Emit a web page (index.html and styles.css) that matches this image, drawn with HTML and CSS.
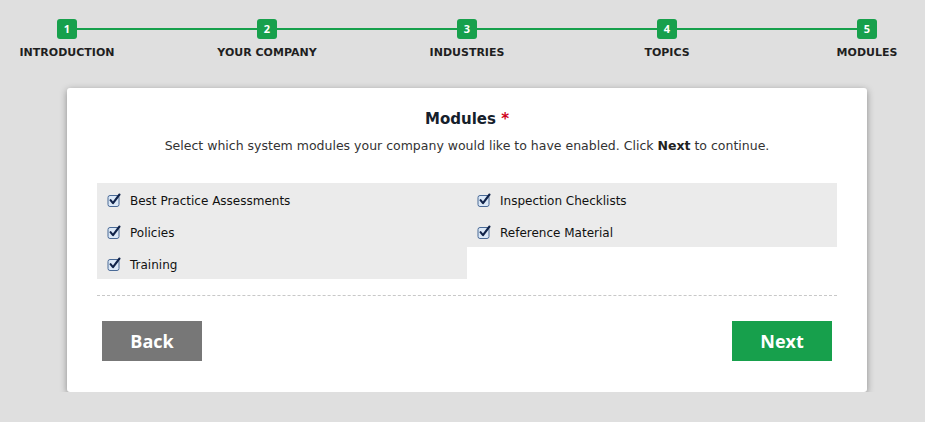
FILE: index.html
```html
<!DOCTYPE html>
<html>
<head>
<meta charset="utf-8">
<link rel="stylesheet" href="styles.css">
</head>
<body>
<ol class="steps">
  <li class="step"><span class="num">1</span><span class="label">INTRODUCTION</span></li>
  <li class="step"><span class="num">2</span><span class="label">YOUR COMPANY</span></li>
  <li class="step"><span class="num">3</span><span class="label">INDUSTRIES</span></li>
  <li class="step"><span class="num">4</span><span class="label">TOPICS</span></li>
  <li class="step"><span class="num">5</span><span class="label">MODULES</span></li>
</ol>
<div class="card">
  <h1 class="title">Modules <span class="req">*</span></h1>
  <p class="intro">Select which system modules your company would like to have enabled. Click <b>Next</b> to continue.</p>
  <div class="options">
    <div class="col">
      <label class="opt"><svg class="cb" viewBox="0 0 14 14"><rect x="1" y="2.5" width="11" height="11" rx="2" fill="#dbe8f7" stroke="#4a6a96"/><path d="M3.5 7.2 L6 10.2 L12.5 1.5" fill="none" stroke="#10234a" stroke-width="2.1" stroke-linecap="round" stroke-linejoin="round"/></svg>Best Practice Assessments</label>
      <label class="opt"><svg class="cb" viewBox="0 0 14 14"><rect x="1" y="2.5" width="11" height="11" rx="2" fill="#dbe8f7" stroke="#4a6a96"/><path d="M3.5 7.2 L6 10.2 L12.5 1.5" fill="none" stroke="#10234a" stroke-width="2.1" stroke-linecap="round" stroke-linejoin="round"/></svg>Policies</label>
      <label class="opt"><svg class="cb" viewBox="0 0 14 14"><rect x="1" y="2.5" width="11" height="11" rx="2" fill="#dbe8f7" stroke="#4a6a96"/><path d="M3.5 7.2 L6 10.2 L12.5 1.5" fill="none" stroke="#10234a" stroke-width="2.1" stroke-linecap="round" stroke-linejoin="round"/></svg>Training</label>
    </div>
    <div class="col">
      <label class="opt"><svg class="cb" viewBox="0 0 14 14"><rect x="1" y="2.5" width="11" height="11" rx="2" fill="#dbe8f7" stroke="#4a6a96"/><path d="M3.5 7.2 L6 10.2 L12.5 1.5" fill="none" stroke="#10234a" stroke-width="2.1" stroke-linecap="round" stroke-linejoin="round"/></svg>Inspection Checklists</label>
      <label class="opt"><svg class="cb" viewBox="0 0 14 14"><rect x="1" y="2.5" width="11" height="11" rx="2" fill="#dbe8f7" stroke="#4a6a96"/><path d="M3.5 7.2 L6 10.2 L12.5 1.5" fill="none" stroke="#10234a" stroke-width="2.1" stroke-linecap="round" stroke-linejoin="round"/></svg>Reference Material</label>
    </div>
  </div>
  <div class="actions">
    <button class="btn back">Back</button>
    <button class="btn next">Next</button>
  </div>
</div>
</body>
</html>
```
FILE: styles.css
```css
html, body {
  margin: 0;
  padding: 0;
  background: #dfdfdf;
  font-family: "DejaVu Sans", "Liberation Sans", sans-serif;
  color: #222;
}
.steps {
  list-style: none;
  margin: 0 0 0 17px;
  padding: 19px 0 0 0;
  width: 900px;
  display: flex;
  gap: 100px;
  background: linear-gradient(#17a04c, #17a04c) no-repeat 50px 28px / 800px 2px;
}
.step {
  width: 100px;
  display: flex;
  flex-direction: column;
  align-items: center;
}
.num {
  width: 20px;
  height: 20px;
  border-radius: 3px;
  background: #17a04c;
  color: #fff;
  font-family: "Open Sans", sans-serif;
  font-weight: 700;
  font-size: 11px;
  line-height: 20px;
  text-align: center;
}
.label {
  margin-top: 7px;
  font-weight: 700;
  font-size: 11px;
  white-space: nowrap;
  color: #1f1f1f;
}
.card {
  margin: 29px 0 0 67px;
  width: 800px;
  box-sizing: border-box;
  background: #fff;
  border-radius: 3px;
  box-shadow: 0 2px 7px rgba(0,0,0,0.38);
  padding: 20px 30px 31px;
}
.title {
  margin: 0;
  text-align: center;
  font-size: 15px;
  font-weight: 700;
  color: #15202b;
  line-height: 22px;
}
.req { color: #d0021b; }
.intro {
  margin: 5px 0 0;
  text-align: center;
  font-size: 12.5px;
  color: #333;
  line-height: 22px;
}
.intro b { color: #222; }
.options {
  margin-top: 26px;
  display: flex;
  align-items: flex-start;
  padding-bottom: 16px;
  border-bottom: 1px dashed #c8c8c8;
}
.col {
  flex: 1;
  background: #ebebeb;
}
.opt {
  height: 32px;
  box-sizing: border-box;
  padding-top: 4px;
  display: flex;
  align-items: center;
  padding-left: 10px;
  font-size: 12px;
  color: #111;
}
.cb {
  width: 14px;
  height: 14px;
  margin-right: 9px;
  margin-top: -3px;
}
.actions {
  display: flex;
  justify-content: space-between;
  padding: 25px 5px 0;
}
.btn {
  width: 100px;
  height: 40px;
  border: 0;
  color: #fff;
  font-family: "Open Sans", sans-serif;
  font-weight: 700;
  font-size: 18px;
}
.back { background: #777; }
.next { background: #17a04c; }
```
